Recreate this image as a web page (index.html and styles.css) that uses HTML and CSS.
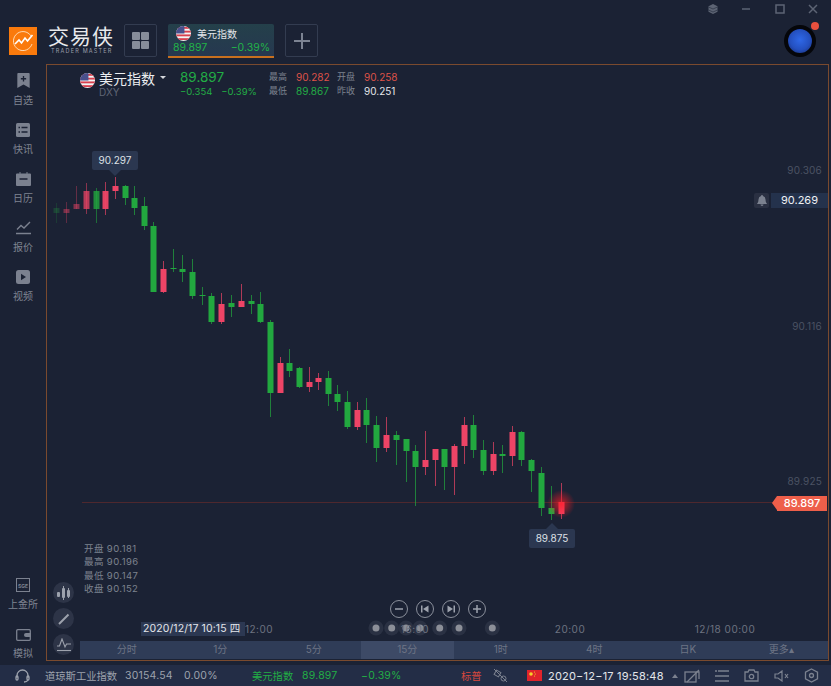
FILE: index.html
```html
<!DOCTYPE html>
<html lang="zh-CN">
<head>
    <meta charset="UTF-8">
    <title>交易侠</title>
    <link rel="stylesheet" href="styles.css">
</head>
<body>
<svg class="defs">
    <symbol id="us-flag" viewBox="0 0 16 16">
        <clipPath id="flag-clip"><circle cx="8" cy="8" r="8"/></clipPath>
        <g clip-path="url(#flag-clip)">
            <rect width="16" height="16" fill="#f4f4f4"/>
            <rect y="1" width="16" height="2" fill="#d8404f"/>
            <rect y="5" width="16" height="2" fill="#d8404f"/>
            <rect y="9" width="16" height="2" fill="#d8404f"/>
            <rect y="13" width="16" height="2" fill="#d8404f"/>
            <rect width="9" height="8" fill="#49508c"/>
        </g>
    </symbol>
</svg>

<div class="app">
    <!-- top bar -->
    <header class="topbar">
        <div class="logo">
            <svg width="28" height="28" viewBox="0 0 28 28">
                <rect width="28" height="28" fill="#fa7a0c"/>
                <path d="M22 9a9.500 9.500 0 1 0 1 8" fill="none" stroke="#ffd9b0" stroke-width="1"/>
                <path d="M6 17l4-4 2.500 3 3.500-5 2.500 3 5-6" fill="none" stroke="#fff" stroke-width="1.600"/>
            </svg>
        </div>
        <div class="brand">
            <div class="brand-name">交易侠</div>
            <div class="brand-sub">TRADER MASTER</div>
        </div>
        <button class="square-btn grid-btn">
            <svg width="17" height="17" viewBox="0 0 17 17" fill="#868c99">
                <rect width="8" height="8" rx="1"/><rect x="9" width="8" height="8" rx="1"/>
                <rect y="9" width="8" height="8" rx="1"/><rect x="9" y="9" width="8" height="8" rx="1"/>
            </svg>
        </button>
        <div class="tab">
            <div class="tab-title">
                <svg width="15" height="15"><use href="#us-flag"/></svg>
                <span>美元指数</span>
            </div>
            <div class="tab-values"><span>89.897</span><span>−0.39%</span></div>
        </div>
        <button class="square-btn plus-btn">
            <svg width="16" height="16" viewBox="0 0 16 16"><path d="M8 0v16M0 8h16" stroke="#7c8392" stroke-width="2"/></svg>
        </button>
        <div class="top-right">
            <div class="win-controls">
                <svg width="10" height="10" viewBox="0 0 10 10"><path d="M5 0l4.500 2.200v5.600L5 10 .5 7.800V2.200z" fill="#5d6474"/><path d="M.5 3L5 5l4.500-2M.5 6L5 8l4.500-2" stroke="#2a3042" fill="none" stroke-width=".7"/></svg>
                <svg width="10" height="10" viewBox="0 0 10 10"><path d="M1 5h8" stroke="#5d6474" stroke-width="1.500"/></svg>
                <svg width="10" height="10" viewBox="0 0 10 10"><rect x="1" y="1" width="8" height="8" fill="none" stroke="#5d6474" stroke-width="1.500"/></svg>
                <svg width="10" height="10" viewBox="0 0 10 10"><path d="M1 1l8 8M9 1l-8 8" stroke="#5d6474" stroke-width="1.500"/></svg>
            </div>
            <div class="avatar"><span class="avatar-dot"></span></div>
        </div>
    </header>

    <div class="main">
        <!-- side nav -->
        <nav class="sidebar">
            <div class="nav-group">
                <div class="nav-item">
                    <svg width="13" height="15" viewBox="0 0 14 17"><path d="M0 1q0-1 1-1h12q1 0 1 1v16l-7-4-7 4z" fill="#7b818f"/><path d="M7 3.500v6M4 6.500h6" stroke="#1b2234" stroke-width="1.500"/></svg>
                    <span>自选</span>
                </div>
                <div class="nav-item">
                    <svg width="14" height="14" viewBox="0 0 14 14"><rect width="14" height="14" rx="1.500" fill="#7b818f"/><path d="M2.500 4.500h1.500M5.500 4.500h6M2.500 9h1.500M5.500 9h6" stroke="#1b2234" stroke-width="1.300"/></svg>
                    <span>快讯</span>
                </div>
                <div class="nav-item">
                    <svg width="15" height="14" viewBox="0 0 15 14"><path d="M1 1.500h2.500V0h1v1.500h6V0h1v1.500H14q1 0 1 1V13q0 1-1 1H1q-1 0-1-1V2.500q0-1 1-1z" fill="#7b818f"/><path d="M3.500 7h8" stroke="#1b2234" stroke-width="1.500"/></svg>
                    <span>日历</span>
                </div>
                <div class="nav-item">
                    <svg width="15" height="14" viewBox="0 0 15 14"><path d="M1 8.500l4-4 3 2.500L14 1" fill="none" stroke="#7b818f" stroke-width="1.400"/><path d="M0 12.500h15" stroke="#7b818f" stroke-width="1.500"/></svg>
                    <span>报价</span>
                </div>
                <div class="nav-item">
                    <svg width="14" height="14" viewBox="0 0 14 14"><rect width="14" height="14" rx="2.500" fill="#7b818f"/><path d="M5 3.800v6.400L10 7z" fill="#1b2234"/></svg>
                    <span>视频</span>
                </div>
            </div>
            <div class="nav-group nav-bottom">
                <div class="nav-item">
                    <svg width="14" height="14" viewBox="0 0 14 14"><rect x=".5" y=".5" width="13" height="13" fill="none" stroke="#7b818f"/><text x="7" y="9.500" class="sge">SGE</text></svg>
                    <span>上金所</span>
                </div>
                <div class="nav-item">
                    <svg width="15" height="12" viewBox="0 0 15 12"><rect x=".7" y=".7" width="13.600" height="10.600" rx="1" fill="none" stroke="#7b818f" stroke-width="1.300"/><path d="M15 4H10a2 2 0 0 0 0 4h5z" fill="#7b818f"/></svg>
                    <span>模拟</span>
                </div>
            </div>
        </nav>

        <!-- chart pane -->
        <section class="pane">
            <svg id="chart" class="chart" width="781" height="595" viewBox="47 65 781 595">
                <defs>
                    <radialGradient id="glow">
                        <stop offset="0" stop-color="#ff1a24" stop-opacity=".75"/>
                        <stop offset="1" stop-color="#ff1a24" stop-opacity="0"/>
                    </radialGradient>
                </defs>
                <path d="M82 502.500H775" stroke="#4e282e" stroke-width="1"/>
                <text x="822" y="174" class="price-label">90.306</text>
                <text x="822" y="330" class="price-label">90.116</text>
                <text x="822" y="485" class="price-label">89.925</text>
                <text x="259" y="633" class="time-label">12:00</text>
                <text x="570" y="633" class="time-label">20:00</text>
                <text x="725" y="633" class="time-label">12/18 00:00</text>
            </svg>

            <div class="quote">
                <div class="quote-name">
                    <svg width="15" height="15"><use href="#us-flag"/></svg>
                    <div class="name-text">
                        <div class="name-row">美元指数<i class="caret"></i></div>
                        <div class="code">DXY</div>
                    </div>
                </div>
                <div class="quote-price">
                    <div class="last green">89.897</div>
                    <div class="change green"><span>−0.354</span><span>−0.39%</span></div>
                </div>
                <div class="stats">
                    <span class="dim">最高</span><span class="red">90.282</span><span class="dim">开盘</span><span class="red">90.258</span>
                    <span class="dim">最低</span><span class="green">89.867</span><span class="dim">昨收</span><span class="white">90.251</span>
                </div>
            </div>

            <div class="tip tip-high">90.297</div>
            <div class="tip tip-low">89.875</div>

            <div class="alert-row">
                <div class="bell">
                    <svg width="10" height="11" viewBox="0 0 10 11"><path d="M5 0a1 1 0 0 1 1 1q2.500.6 2.500 3.500c0 3 1.500 4 1.500 4.500H0c0-.5 1.500-1.500 1.500-4.500Q1.500 1.600 4 1a1 1 0 0 1 1-1zM3.500 9.600h3a1.500 1.400 0 0 1-3 0z" fill="#7b818f"/></svg>
                </div>
                <div class="alert-price">90.269</div>
            </div>
            <div class="last-tag">89.897</div>

            <div class="ohlc">
                <div>开盘 90.181</div>
                <div>最高 90.196</div>
                <div>最低 90.147</div>
                <div>收盘 90.152</div>
            </div>

            <div class="tools">
                <button class="round-btn">
                    <svg width="14" height="14" viewBox="0 0 14 14" fill="#9da2ad"><rect x="0" y="6" width="3" height="5" rx="1"/><rect x="5" y="2" width="3" height="10" rx="1"/><rect x="6" y="0" width="1" height="14"/><rect x="10" y="4" width="3" height="7" rx="1"/><rect x="11" y="2" width="1" height="10"/></svg>
                </button>
                <button class="round-btn">
                    <svg width="12" height="12" viewBox="0 0 12 12"><path d="M1 11L10.500 1.500" stroke="#9da2ad" stroke-width="2"/></svg>
                </button>
                <button class="round-btn">
                    <svg width="14" height="14" viewBox="0 0 14 14" fill="none" stroke="#9da2ad" stroke-width="1.100"><path d="M0 8h2.500L5 1l3 8 1.500-3H14"/><path d="M0 12.500h14"/></svg>
                </button>
            </div>

            <div class="zoom-controls">
                <button class="ring-btn"><svg width="10" height="10" viewBox="0 0 10 10"><path d="M1 5h8" stroke="#9da2ad" stroke-width="1.500"/></svg></button>
                <button class="ring-btn"><svg width="10" height="10" viewBox="0 0 10 10" fill="#9da2ad"><rect x="1" y="1.500" width="1.500" height="7"/><path d="M8.500 1.500v7L3 5z"/></svg></button>
                <button class="ring-btn"><svg width="10" height="10" viewBox="0 0 10 10" fill="#9da2ad"><rect x="7.500" y="1.500" width="1.500" height="7"/><path d="M1.500 1.500v7L7 5z"/></svg></button>
                <button class="ring-btn"><svg width="10" height="10" viewBox="0 0 10 10"><path d="M1 5h8M5 1v8" stroke="#9da2ad" stroke-width="1.500"/></svg></button>
            </div>

            <div class="cross-time">2020/12/17 10:15 四</div>

            <div class="periods">
                <span>分时</span><span>1分</span><span>5分</span><span class="active">15分</span>
                <span>1时</span><span>4时</span><span>日K</span><span>更多▴</span>
            </div>
        </section>
    </div>

    <!-- status bar -->
    <footer class="statusbar">
        <svg class="headset" width="15" height="14" viewBox="0 0 15 14" fill="none" stroke="#9da2ad" stroke-width="1.300"><path d="M2 9V6.500a5.500 5.500 0 0 1 11 0V9"/><rect x="1" y="7" width="2" height="4" rx="1"/><rect x="12" y="7" width="2" height="4" rx="1"/><path d="M13 11q-1 2-4 2"/></svg>
        <span class="st-name">道琼斯工业指数</span>
        <span class="st-val">30154.54</span>
        <span class="st-pct">0.00%</span>
        <span class="st-usd green">美元指数</span>
        <span class="st-usd-val green">89.897</span>
        <span class="st-usd-pct green">−0.39%</span>
        <span class="st-sp">标普</span>
        <svg class="st-link" width="15" height="15" viewBox="0 0 15 15" fill="none" stroke="#7b818f"><path d="M1 1l13 13"/><rect x="2" y="3" width="5" height="5" transform="rotate(30 4.500 5.500)"/><circle cx="10.500" cy="10.500" r="2.500"/></svg>
        <svg class="st-flag" width="15" height="11" viewBox="0 0 15 11"><rect width="15" height="11" fill="#e0232b"/><circle cx="4" cy="4" r="1.800" fill="#f6d32a"/><circle cx="7.500" cy="2" r=".6" fill="#f6d32a"/><circle cx="8.300" cy="4" r=".6" fill="#f6d32a"/><circle cx="7.500" cy="6" r=".6" fill="#f6d32a"/></svg>
        <span class="st-time">2020−12−17 19:58:48</span>
        <i class="st-caret"></i>
        <div class="st-icons">
            <svg width="16" height="14" viewBox="0 0 16 14" fill="none" stroke="#7b818f" stroke-width="1.300"><rect x="1" y="3" width="11" height="10"/><path d="M3 13L15 1M12 3h3v7"/></svg>
            <svg width="14" height="14" viewBox="0 0 14 14" stroke="#7b818f" stroke-width="1.500"><path d="M3 2h11M0 7h14M0 12h14"/><circle cx="1" cy="2" r="1" fill="#7b818f" stroke="none"/></svg>
            <svg width="15" height="13" viewBox="0 0 15 13" fill="none" stroke="#7b818f" stroke-width="1.300"><path d="M1 3h3l1-2h5l1 2h3v9H1z"/><circle cx="7.500" cy="7.500" r="2.200"/></svg>
            <svg width="15" height="12" viewBox="0 0 15 12" fill="none" stroke="#7b818f" stroke-width="1.200"><path d="M1 4h3l4-3v10L4 8H1z"/><path d="M11 4l3 4M14 4l-3 4"/></svg>
            <svg width="15" height="15" viewBox="0 0 15 15" fill="none" stroke="#7b818f" stroke-width="1.300"><path d="M7.500 1l6 3.200v6.600l-6 3.200-6-3.200V4.200z"/><circle cx="7.500" cy="7.500" r="2"/></svg>
        </div>
    </footer>
</div>
<script src="chart.js"></script>
</body>
</html>
```

FILE: styles.css
```css
* {
    box-sizing: border-box;
}
html, body {
    margin: 0;
    padding: 0;
    overflow: hidden;
}
body {
    background-color: #1b2234;
    color: #8a8f9b;
    font-family: Inter, "Noto Sans CJK SC", sans-serif;
    font-size: 10px;
}
button {
    padding: 0;
    background: none;
    border: none;
}
.defs {
    position: absolute;
    width: 0;
    height: 0;
}
.green { color: #22ad45; }
.red { color: #df5248; }
.white { color: #e4e6ea; }
.dim { color: #7d828f; font-size: 9px; }

.app {
    display: flex;
    flex-direction: column;
    width: 831px;
    height: 686px;
}

/* top bar */
.topbar {
    display: flex;
    align-items: flex-start;
    height: 64px;
    flex: none;
}
.logo {
    margin: 27px 0 0 9px;
    height: 28px;
}
.brand {
    margin: 24px 0 0 11px;
    width: 64px;
    color: #e8e9ec;
}
.brand-name {
    font-size: 21px;
    line-height: 25px;
    letter-spacing: 1px;
    white-space: nowrap;
}
.brand-sub {
    margin-top: -1px;
    padding-left: 3px;
    font-size: 5.500px;
    line-height: 6px;
    letter-spacing: 1.200px;
    color: #9a9ea9;
    white-space: nowrap;
}
.square-btn {
    display: flex;
    align-items: center;
    justify-content: center;
    width: 33px;
    height: 33px;
    margin-top: 24px;
    border: 1px solid #333c50;
    border-radius: 2px;
}
.grid-btn {
    margin-left: 12px;
}
.plus-btn {
    margin-left: 11px;
}
.tab {
    width: 106px;
    height: 34px;
    margin: 24px 0 0 11px;
    padding-top: 2px;
    background: linear-gradient(#24404a, #263850);
    border-bottom: 2px solid #c8701e;
    border-radius: 2px 2px 0 0;
}
.tab-title {
    display: flex;
    align-items: center;
    gap: 6px;
    padding-left: 8px;
    height: 15px;
    font-size: 10px;
    color: #e4e6ea;
}
.tab-values {
    display: flex;
    justify-content: space-between;
    padding: 0 4px 0 5px;
    font-size: 10.500px;
    line-height: 14px;
    color: #22b348;
}
.top-right {
    margin-left: auto;
    display: flex;
    flex-direction: column;
    align-items: flex-end;
}
.win-controls {
    display: flex;
    gap: 23.500px;
    margin: 4px 13px 0 0;
}
.avatar {
    position: relative;
    width: 32px;
    height: 32px;
    margin: 11px 15px 0 0;
    border-radius: 50%;
    border: 4px solid #05060a;
    background: radial-gradient(circle at 50% 45%, #2f68e8, #2450c0 55%, #18265e);
}
.avatar-dot {
    position: absolute;
    top: -7px;
    right: -7px;
    width: 8px;
    height: 8px;
    border-radius: 50%;
    background-color: #e8503e;
}

/* sidebar */
.main {
    display: flex;
    height: 597px;
    flex: none;
}
.sidebar {
    display: flex;
    flex-direction: column;
    justify-content: space-between;
    width: 46px;
    flex: none;
    padding: 8px 0 1px;
}
.nav-group {
    display: flex;
    flex-direction: column;
    gap: 14px;
}
.nav-item {
    display: flex;
    flex-direction: column;
    align-items: center;
    justify-content: flex-end;
    height: 35px;
    color: #7f8491;
    gap: 5px;
    line-height: 14px;
}
.sge {
    font-size: 5px;
    text-anchor: middle;
    fill: #7b818f;
    font-weight: 700;
}

/* chart pane */
.pane {
    position: relative;
    width: 783px;
    border: 1px solid #7a4a2e;
}
.chart {
    position: absolute;
    left: 0;
    top: 0;
}
.price-label {
    font-size: 10px;
    letter-spacing: .2px;
    text-anchor: end;
    fill: #4b5263;
}
.time-label {
    font-size: 10px;
    letter-spacing: .5px;
    text-anchor: middle;
    fill: #6d7280;
}

.quote {
    position: relative;
    display: flex;
    margin-left: 33px;
    padding-top: 5px;
}
.quote-name {
    display: flex;
    gap: 4px;
    width: 100px;
    padding-top: 3px;
}
.name-text {
    margin-top: -4px;
}
.name-row {
    display: flex;
    align-items: center;
    gap: 5px;
    height: 17px;
    font-size: 14px;
    color: #eceef1;
}
.caret {
    width: 0;
    height: 0;
    border-left: 3px solid transparent;
    border-right: 3px solid transparent;
    border-top: 3px solid #d5d7dc;
}
.code {
    margin-top: 1px;
    font-size: 10px;
    line-height: 11px;
    color: #5f6575;
}
.quote-price {
    width: 89px;
}
.last {
    font-size: 13.500px;
    line-height: 15px;
}
.change {
    display: flex;
    gap: 9px;
    font-size: 9.500px;
    line-height: 14px;
}
.stats {
    display: grid;
    grid-template-columns: 27px 41px 27px auto;
    grid-auto-rows: 14px;
    font-size: 10px;
    line-height: 14px;
}

.tip {
    position: absolute;
    height: 19px;
    width: 46px;
    text-align: center;
    background-color: #2b3750;
    border-radius: 2px;
    color: #dde0e5;
    font-size: 10px;
    line-height: 19px;
}
.tip::after {
    content: "";
    position: absolute;
    left: 50%;
    margin-left: -6px;
    border-left: 6px solid transparent;
    border-right: 6px solid transparent;
}
.tip-high {
    left: 45px;
    top: 86px;
}
.tip-high::after {
    top: 19px;
    border-top: 6px solid #2b3750;
}
.tip-low {
    left: 482px;
    top: 464px;
}
.tip-low::after {
    bottom: 19px;
    border-bottom: 6px solid #2b3750;
}

.alert-row {
    position: absolute;
    right: 0;
    top: 128px;
    display: flex;
    gap: 2px;
}
.bell {
    display: flex;
    align-items: center;
    justify-content: center;
    width: 15px;
    height: 15px;
    background-color: #2a3042;
    border-radius: 2px;
}
.alert-price {
    width: 57px;
    height: 15px;
    background-color: #24324c;
    color: #eef0f3;
    font-size: 11px;
    line-height: 15px;
    text-align: center;
}
.last-tag {
    position: absolute;
    left: 730px;
    top: 431px;
    width: 50px;
    height: 15px;
    background-color: #ee5f4a;
    color: #fff;
    font-size: 11px;
    font-weight: 500;
    line-height: 15px;
    text-align: center;
}
.last-tag::before {
    content: "";
    position: absolute;
    left: -5px;
    top: 0;
    border-top: 7.500px solid transparent;
    border-bottom: 7.500px solid transparent;
    border-right: 5px solid #ee5f4a;
}

.ohlc {
    position: absolute;
    left: 37px;
    top: 477px;
    color: #7d828f;
    font-size: 9.500px;
    letter-spacing: .4px;
    line-height: 13.400px;
}

.tools {
    position: absolute;
    left: 6px;
    top: 517px;
    display: flex;
    flex-direction: column;
    gap: 5px;
}
.round-btn {
    display: flex;
    align-items: center;
    justify-content: center;
    width: 21px;
    height: 21px;
    border-radius: 50%;
    background-color: #2d3447;
}
.zoom-controls {
    position: absolute;
    left: 343px;
    top: 535px;
    display: flex;
    gap: 8px;
}
.ring-btn {
    display: flex;
    align-items: center;
    justify-content: center;
    width: 18px;
    height: 18px;
    border: 1px solid #8a8f9b;
    border-radius: 50%;
}
.cross-time {
    position: absolute;
    left: 94px;
    top: 557px;
    width: 104px;
    height: 14px;
    padding-left: 2px;
    background-color: #2c3852;
    color: #e4e6ea;
    font-size: 10.500px;
    letter-spacing: .1px;
    line-height: 14px;
    white-space: nowrap;
    overflow: hidden;
}
.periods {
    position: absolute;
    left: 33px;
    right: 0;
    bottom: 1px;
    display: flex;
    height: 18px;
    background-color: #2f3c57;
}
.periods span {
    flex: 1;
    text-align: center;
    line-height: 17px;
    color: #6d7485;
    font-size: 10px;
}
.periods .active {
    background-color: #3d4a66;
}

/* status bar */
.statusbar {
    display: flex;
    align-items: center;
    height: 21px;
    margin-top: 4px;
    background-color: #232d46;
    font-size: 10px;
    color: #9da2ad;
    white-space: nowrap;
}
.headset { margin-left: 15px; }
.st-name { margin-left: 15px; width: 80px; font-size: 10.300px; }
.st-val { width: 59px; font-size: 10.500px; letter-spacing: .2px; }
.st-pct { width: 68px; font-size: 10.500px; letter-spacing: .2px; }
.st-usd { width: 50px; font-size: 10.300px; }
.st-usd-val { width: 59px; font-size: 10.500px; letter-spacing: .2px; }
.st-usd-pct { width: 100px; font-size: 10.500px; letter-spacing: .2px; }
.st-sp { width: 32px; color: #d8483e; font-size: 10.300px; }
.st-link { margin-right: 19px; }
.st-flag { margin-right: 6px; }
.st-time { width: 124px; color: #e4e6ea; font-size: 11px; letter-spacing: .2px; }
.st-caret {
    border-left: 3px solid transparent;
    border-right: 3px solid transparent;
    border-bottom: 4px solid #7b818f;
}
.st-icons {
    display: flex;
    align-items: center;
    gap: 15px;
    margin-left: 6px;
}
```

FILE: chart.js
```js
// x, wick top, wick bottom, body top, body bottom, colour, opacity
const G = '#22a83f';
const R = '#ee4466';
const candles = [
    [56.7, 203, 223, 208, 213, G, .25],
    [66.3, 202, 223, 209, 213, R, .45],
    [76, 186, 209, 204, 209, R, .5],
    [86.3, 183, 214, 191, 209, R, .75],
    [96, 188, 223, 191, 209, G, .8],
    [105.7, 182, 215, 191, 209, R, .95],
    [115.3, 177, 199, 186, 191, R, 1],
    [125, 185, 205, 186, 198, G, 1],
    [134.3, 186, 215, 198, 208, G, 1],
    [144.3, 197, 230, 206, 226, G, 1],
    [153.7, 222, 292, 226, 292, G, 1],
    [163.3, 261, 293, 269, 292, R, 1],
    [173, 249, 272, 268, 269, G, 1],
    [182.7, 255, 282, 269, 272, G, 1],
    [192.3, 259, 299, 272, 296, G, 1],
    [202, 287, 305, 295, 296, G, 1],
    [211.7, 293, 324, 296, 322, G, 1],
    [221.3, 293, 324, 304, 322, R, 1],
    [231, 295, 317, 303, 307, G, 1],
    [241.3, 284, 307, 301, 307, R, 1],
    [251, 295, 314, 301, 304, G, 1],
    [260.3, 292, 323, 304, 322, G, 1],
    [270.3, 320, 417, 322, 393, G, 1],
    [280, 357, 393, 363, 393, R, 1],
    [289.3, 349, 377, 363, 371, G, 1],
    [299.3, 367, 388, 368, 387, G, 1],
    [309, 367, 392, 382, 387, R, 1],
    [318.3, 373, 390, 378, 382, R, 1],
    [328.3, 371, 406, 378, 394, G, 1],
    [337.7, 385, 411, 394, 402, G, 1],
    [347.3, 391, 429, 402, 427, G, 1],
    [357, 402, 430, 410, 427, R, 1],
    [366.7, 398, 443, 410, 425, G, 1],
    [376.3, 416, 462, 425, 448, G, 1],
    [386.7, 417, 452, 435, 448, R, 1],
    [396.3, 431, 465, 435, 440, G, 1],
    [406, 439, 482, 439, 451, G, 1],
    [415.7, 445, 506, 451, 467, G, 1],
    [425.3, 431, 475, 460, 467, R, 1],
    [435, 449, 486, 449, 460, R, 1],
    [444.7, 449, 490, 449, 467, G, 1],
    [454.3, 444, 495, 446, 467, R, 1],
    [464, 417, 464, 425, 446, R, 1],
    [473.7, 415, 458, 425, 450, G, 1],
    [483.3, 440, 475, 450, 471, G, 1],
    [493, 442, 475, 454, 471, R, 1],
    [502.3, 445, 473, 454, 456, G, 1],
    [512, 426, 466, 432, 456, R, 1],
    [521.7, 431, 466, 432, 460, G, 1],
    [531.3, 459, 492, 460, 471, G, 1],
    [541.7, 467, 516, 473, 508, G, 1],
    [551.3, 486, 520, 508, 514, G, 1],
    [561, 483, 519, 502, 514, R, 1]
];
const dots = [376, 391.7, 406, 420, 439.7, 459, 492.3];
const svg = document.getElementById('chart');

function add(tag, attrs) {
    const el = document.createElementNS('http://www.w3.org/2000/svg', tag);
    for (const key in attrs) el.setAttribute(key, attrs[key]);
    svg.appendChild(el);
    return el;
}

candles.forEach(([x, top, bottom, bodyTop, bodyBottom, color, opacity]) => {
    const left = Math.round(x - 0.5);
    add('rect', { x: left, y: top, width: 1, height: bottom - top, fill: color, opacity: opacity * 0.7 });
    add('rect', { x: left - 2.5, y: bodyTop, width: 6, height: Math.max(bodyBottom - bodyTop, 1), fill: color, opacity: opacity });
});

// glow on the last candle
add('circle', { cx: 561, cy: 504, r: 14, fill: 'url(#glow)' });

// markers along the time axis, the 16:00 label sits on top of them
dots.forEach(x => {
    add('circle', { cx: x, cy: 628, r: 7.5, fill: '#2a3143' });
    add('circle', { cx: x, cy: 628, r: 3.5, fill: '#8c8f98' });
});
const label = add('text', { x: 415, y: 633, class: 'time-label' });
label.textContent = '16:00';
```
